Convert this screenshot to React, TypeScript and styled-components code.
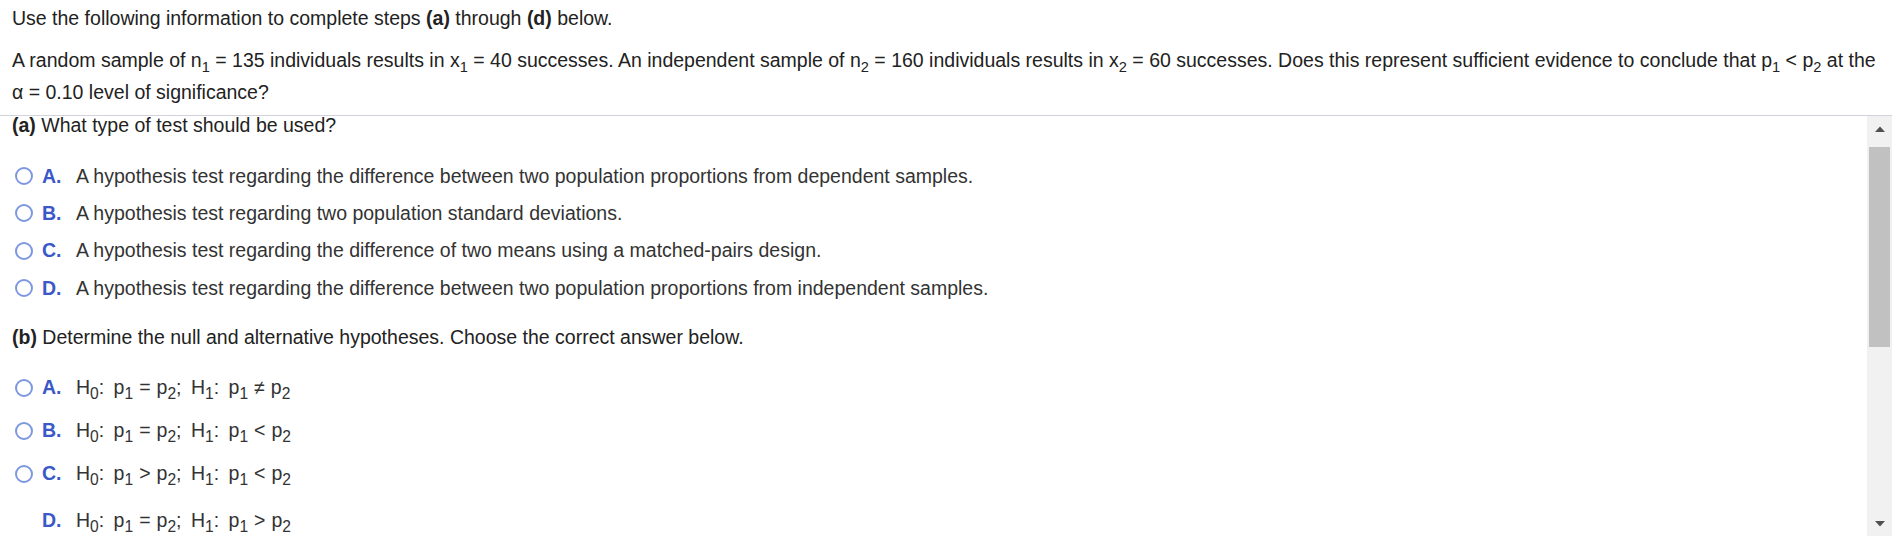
import React from "react";
import styled, { createGlobalStyle } from "styled-components";

const GlobalStyle = createGlobalStyle`
  html, body {
    margin: 0;
    padding: 0;
    background: #ffffff;
  }
  body {
    font-family: "Liberation Sans", Arial, sans-serif;
    font-size: 19.5px;
    color: #222222;
  }
`;

const Page = styled.div`
  width: 1902px;
  height: 546px;
  display: flex;
  flex-direction: column;
  overflow: hidden;
`;

const Intro = styled.div`
  padding: 7px 12px 0 12px;
`;

const Lead = styled.p`
  margin: 0;
  line-height: 22.4px;
`;

const Problem = styled.p`
  margin: 15px 0 0 0;
  line-height: 32px;
  white-space: nowrap;
`;

const Sub = styled.sub<{ $size?: number }>`
  font-size: ${(p) => p.$size ?? 0.75}em;
  vertical-align: -0.32em;
  line-height: 0;
`;

const Viewer = styled.div`
  margin: 7px 10px 0 0;
  border-top: 1px solid #d2d2da;
  height: 420px;
  display: flex;
`;

const Scroller = styled.div`
  flex: 1;
  overflow: hidden;
  padding-left: 12px;
`;

const Content = styled.div`
  margin-top: -2px;
`;

const Prompt = styled.div<{ $gap?: number }>`
  line-height: 22.4px;
  margin-top: ${(p) => p.$gap ?? 0}px;
`;

const Choices = styled.div<{ $gap: number }>`
  display: flex;
  flex-direction: column;
  gap: ${(p) => p.$gap}px;
  margin-top: 28px;
`;

const Choice = styled.div<{ $extra?: number }>`
  display: flex;
  align-items: center;
  height: 22.4px;
  color: #333333;
  margin-top: ${(p) => p.$extra ?? 0}px;
`;

const RadioSlot = styled.span`
  width: 30px;
  display: flex;
  align-items: center;
`;

const Radio = styled.span`
  box-sizing: border-box;
  width: 18px;
  height: 18px;
  border-radius: 50%;
  border: 2px solid #7e98df;
  background: #ffffff;
  margin-left: 3px;
`;

const Letter = styled.span`
  width: 34px;
  font-weight: bold;
  color: #3a58c8;
`;

const ChoiceText = styled.span`
  white-space: nowrap;
`;

const Math = styled.span`
  white-space: nowrap;
  color: #333333;
  word-spacing: 4px;
`;

const Rel = styled.span`
  margin: 0 6px;
`;

const ScrollBar = styled.div`
  width: 25px;
  background: #f1f1f1;
  display: flex;
  flex-direction: column;
`;

const ArrowButton = styled.div`
  height: 25px;
  display: flex;
  align-items: center;
  justify-content: center;
`;

const Track = styled.div`
  flex: 1;
  padding: 6px 2px 0 2px;
`;

const Thumb = styled.div`
  height: 200px;
  background: #c1c1c1;
`;

const Arrow = ({ down }: { down?: boolean }) => (
  <ArrowButton>
    <svg width="10" height="6" viewBox="0 0 10 6">
      {down ? (
        <polygon points="0,0 10,0 5,5.5" fill="#505050" />
      ) : (
        <polygon points="5,0.5 10,6 0,6" fill="#505050" />
      )}
    </svg>
  </ArrowButton>
);

type Option = { letter: string; text: React.ReactNode; radio?: boolean };

const partA: Option[] = [
  {
    letter: "A.",
    text: "A hypothesis test regarding the difference between two population proportions from dependent samples.",
  },
  { letter: "B.", text: "A hypothesis test regarding two population standard deviations." },
  {
    letter: "C.",
    text: "A hypothesis test regarding the difference of two means using a matched-pairs design.",
  },
  {
    letter: "D.",
    text: "A hypothesis test regarding the difference between two population proportions from independent samples.",
  },
];

const Hyp = ({ h0, h1 }: { h0: string; h1: string }) => (
  <Math>
    H<Sub $size={0.8}>0</Sub>: p<Sub $size={0.8}>1</Sub>
    <Rel>{h0}</Rel>p<Sub $size={0.8}>2</Sub>; H<Sub $size={0.8}>1</Sub>: p
    <Sub $size={0.8}>1</Sub>
    <Rel>{h1}</Rel>p<Sub $size={0.8}>2</Sub>
  </Math>
);

const partB: Option[] = [
  { letter: "A.", text: <Hyp h0="=" h1="≠" /> },
  { letter: "B.", text: <Hyp h0="=" h1="<" /> },
  { letter: "C.", text: <Hyp h0=">" h1="<" /> },
  { letter: "D.", text: <Hyp h0="=" h1=">" />, radio: false },
];

const ChoiceList = ({ options, gap }: { options: Option[]; gap: number }) => (
  <Choices $gap={gap}>
    {options.map((o, i) => (
      <Choice key={o.letter} $extra={i === 3 && gap > 16 ? 4 : 0}>
        <RadioSlot>{o.radio === false ? null : <Radio />}</RadioSlot>
        <Letter>{o.letter}</Letter>
        <ChoiceText>{o.text}</ChoiceText>
      </Choice>
    ))}
  </Choices>
);

export default function App() {
  return (
    <>
      <GlobalStyle />
      <Page>
        <Intro>
          <Lead>
            Use the following information to complete steps <b>(a)</b> through <b>(d)</b> below.
          </Lead>
          <Problem>
            A random sample of n<Sub>1</Sub> = 135 individuals results in x<Sub>1</Sub> = 40
            successes. An independent sample of n<Sub>2</Sub> = 160 individuals results in x
            <Sub>2</Sub> = 60 successes. Does this represent sufficient evidence to conclude that p
            <Sub>1</Sub> &lt; p<Sub>2</Sub> at the
            <br />
            α = 0.10 level of significance?
          </Problem>
        </Intro>
        <Viewer>
          <Scroller>
            <Content>
              <Prompt>
                <b>(a)</b> What type of test should be used?
              </Prompt>
              <ChoiceList options={partA} gap={15} />
              <Prompt $gap={27}>
                <b>(b)</b> Determine the null and alternative hypotheses. Choose the correct answer
                below.
              </Prompt>
              <ChoiceList options={partB} gap={20.5} />
            </Content>
          </Scroller>
          <ScrollBar>
            <Arrow />
            <Track>
              <Thumb />
            </Track>
            <Arrow down />
          </ScrollBar>
        </Viewer>
      </Page>
    </>
  );
}
